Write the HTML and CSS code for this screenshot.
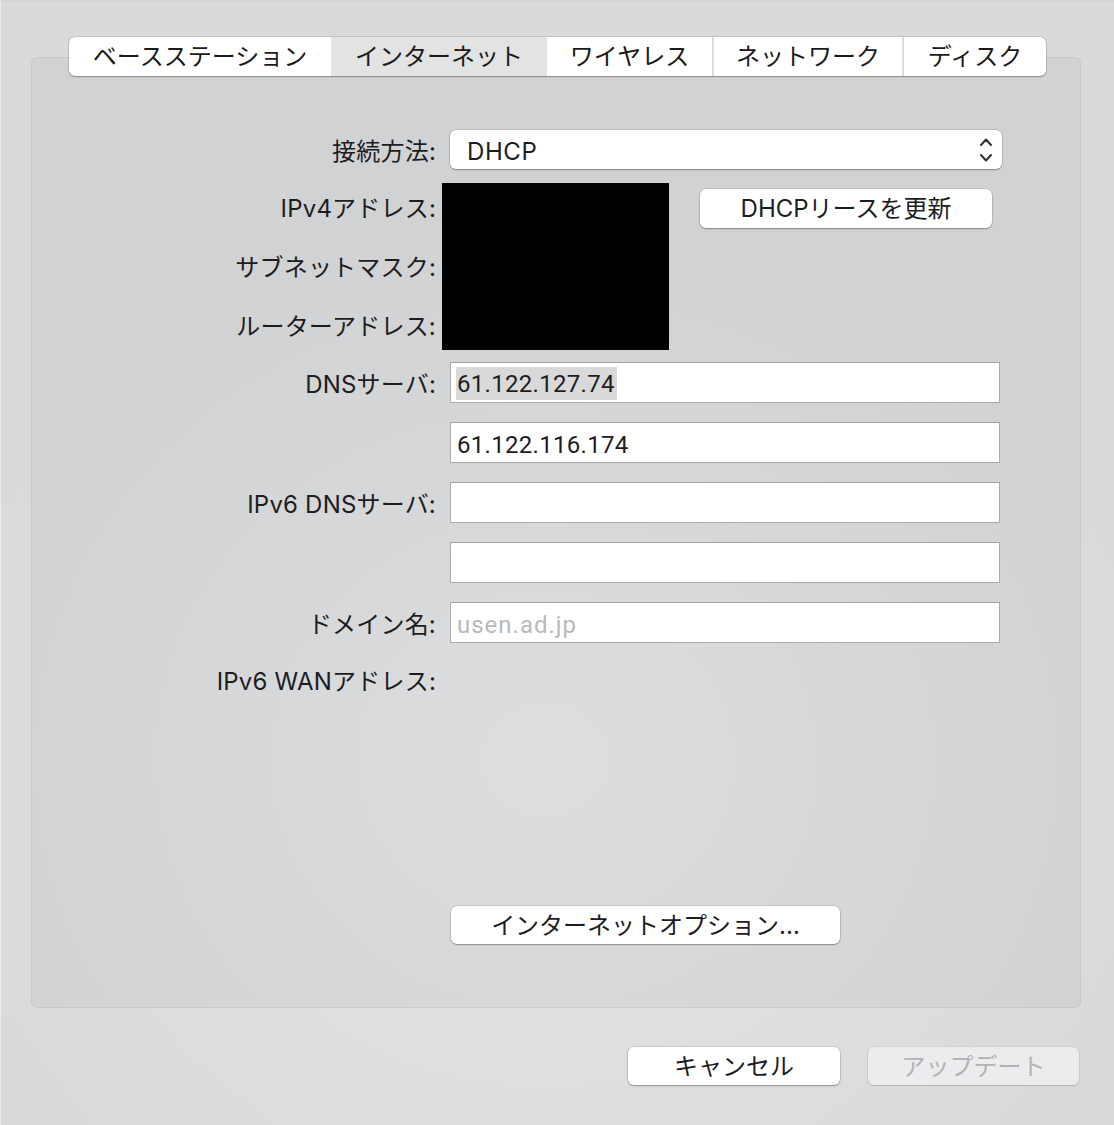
FILE: index.html
```html
<!DOCTYPE html>
<html lang="ja">
<head>
<meta charset="utf-8">
<title>インターネット</title>
<link rel="stylesheet" href="styles.css">
</head>
<body>
<div class="window">
  <div class="panel">
    <div class="tabs">
      <div class="tab t1">ベースステーション</div>
      <div class="tab t2 sel">インターネット</div>
      <div class="tab t3 after-sel">ワイヤレス</div>
      <div class="tab t4">ネットワーク</div>
      <div class="tab t5">ディスク</div>
    </div>

    <div class="form">
      <div class="row r-popup">
        <div class="label">接続方法:</div>
        <div class="popup">
          <span class="popup-text">DHCP</span>
          <svg class="chev" width="14" height="28" viewBox="0 0 14 28" aria-hidden="true">
            <polyline points="2,9 7,3.5 12,9" fill="none" stroke="#333" stroke-width="2.1" stroke-linecap="round" stroke-linejoin="round"/>
            <polyline points="2,19 7,24.5 12,19" fill="none" stroke="#333" stroke-width="2.1" stroke-linecap="round" stroke-linejoin="round"/>
          </svg>
        </div>
      </div>

      <div class="row lease">
        <div class="labels">
          <div class="label tall">IPv4アドレス:</div>
          <div class="label tall">サブネットマスク:</div>
          <div class="label tall">ルーターアドレス:</div>
        </div>
        <div class="redacted"></div>
        <div class="btn lease-btn">DHCPリースを更新</div>
      </div>

      <div class="row r-field first-field">
        <div class="label">DNSサーバ:</div>
        <div class="field"><span class="selected">61.122.127.74</span></div>
      </div>
      <div class="row r-field">
        <div class="label"></div>
        <div class="field"><span class="val">61.122.116.174</span></div>
      </div>
      <div class="row r-field">
        <div class="label">IPv6 DNSサーバ:</div>
        <div class="field"></div>
      </div>
      <div class="row r-field">
        <div class="label"></div>
        <div class="field"></div>
      </div>
      <div class="row r-field">
        <div class="label">ドメイン名:</div>
        <div class="field"><span class="placeholder">usen.ad.jp</span></div>
      </div>
      <div class="row r-wan">
        <div class="label">IPv6 WANアドレス:</div>
      </div>
    </div>

    <div class="btn options-btn">インターネットオプション...</div>
  </div>

  <div class="footer">
    <div class="btn cancel-btn">キャンセル</div>
    <div class="btn update-btn disabled">アップデート</div>
  </div>
</div>
</body>
</html>
```

FILE: styles.css
```css
html, body {
  margin: 0;
  padding: 0;
}

body {
  width: 1114px;
  height: 1125px;
  overflow: hidden;
  font-family: Inter, "Noto Sans CJK JP", sans-serif;
  color: #1d1d1f;
  background: radial-gradient(ellipse 620px 560px at 545px 760px, #e6e7e9 0%, #dfe0e2 45%, #d9dadc 100%);
}

.window {
  box-sizing: border-box;
  height: 1125px;
  padding: 57px 33px 0 31px;
  box-shadow: inset 1px 0 0 #ececee, inset 0 2px 0 #d2d3d5;
}

.panel {
  box-sizing: border-box;
  width: 1050px;
  border: 1px solid rgba(0, 0, 0, 0.055);
  border-radius: 7px;
  background: rgba(0, 0, 0, 0.035);
  display: flex;
  flex-direction: column;
  padding-bottom: 63px;
}

/* Tabs */
.tabs {
  align-self: flex-start;
  margin: -21px 0 0 37px;
  display: flex;
  height: 39px;
  background: #fff;
  border-radius: 6px;
  overflow: hidden;
  box-shadow: 0 0 0 0.5px rgba(0, 0, 0, 0.2), 0 1px 1.5px rgba(0, 0, 0, 0.28);
}

.tab {
  box-sizing: border-box;
  font-size: 24px;
  line-height: 39px;
  color: #1b1b1b;
  border-left: 2px solid #dedede;
  white-space: nowrap;
  text-align: center;
}

.t1 { width: 262px; border-left: none; }
.t2 { width: 216px; }
.t3 { width: 165px; }
.t4 { width: 190px; }
.t5 { width: 144px; }

.tab.sel {
  background: #e3e3e3;
  border-left: none;
}

.tab.after-sel {
  border-left: none;
}

/* Form */
.form {
  margin-top: 54px;
  display: flex;
  flex-direction: column;
}

.row {
  display: flex;
  align-items: center;
}

.label {
  box-sizing: border-box;
  width: 404px;
  flex: none;
  text-align: right;
  font-size: 24px;
  line-height: 30px;
  padding-top: 4px;
  letter-spacing: 0.2px;
  color: #1d1d1f;
  white-space: nowrap;
}

.r-popup {
  height: 39px;
}

.popup {
  margin-left: 14px;
  width: 552px;
  height: 39px;
  box-sizing: border-box;
  background: #fff;
  border-radius: 6px;
  box-shadow: 0 0 0 0.5px rgba(0, 0, 0, 0.18), 0 1px 1.5px rgba(0, 0, 0, 0.3);
  display: flex;
  align-items: center;
  justify-content: space-between;
  padding: 0 9px 0 17px;
}

.popup-text {
  font-size: 24px;
  line-height: 30px;
  padding-top: 4px;
  letter-spacing: 0.6px;
  color: #1d1d1f;
}

.chev {
  display: block;
}

.lease {
  margin-top: 10px;
  align-items: flex-start;
}

.labels {
  display: flex;
  flex-direction: column;
}

.label.tall {
  height: 59px;
  line-height: 59px;
  padding-top: 0;
}

.redacted {
  margin: 4px 0 0 6px;
  width: 227px;
  height: 167px;
  background: #000;
  flex: none;
}

.btn {
  box-sizing: border-box;
  background: #fff;
  border-radius: 6px;
  box-shadow: 0 0 0 0.5px rgba(0, 0, 0, 0.17), 0 1px 1.5px rgba(0, 0, 0, 0.3);
  font-size: 24px;
  color: #1d1d1f;
  text-align: center;
  white-space: nowrap;
  display: flex;
  align-items: center;
  justify-content: center;
  padding-bottom: 4px;
}

.lease-btn {
  margin: 10px 0 0 31px;
  width: 292px;
  height: 39px;
}

.r-field {
  margin-top: 19px;
}

.r-field.first-field {
  margin-top: 6px;
}

.field {
  margin-left: 14px;
  width: 550px;
  height: 41px;
  box-sizing: border-box;
  background: #fff;
  border: 1px solid #ababab;
  border-top-color: #a3a3a3;
  display: flex;
  align-items: center;
  padding: 2px 0 0 5px;
  font-family: Roboto, "Noto Sans CJK JP", sans-serif;
  font-size: 24px;
  letter-spacing: 0.3px;
}

.selected {
  background: #d9d9d9;
  padding: 2px 2px 1px 1px;
  line-height: 30px;
}

.val {
  padding-left: 1px;
  padding-top: 3px;
  line-height: 30px;
}

.placeholder {
  padding-left: 1px;
  padding-top: 3px;
  color: #b9b9b9;
  letter-spacing: 1px;
  line-height: 30px;
}

.r-wan {
  margin-top: 19px;
  height: 39px;
}

.r-wan .label {
  padding-top: 0;
}

.options-btn {
  margin: 205px 0 0 419px;
  width: 389px;
  height: 38px;
  align-self: flex-start;
}

/* Footer */
.footer {
  margin-top: 39px;
  display: flex;
  justify-content: flex-end;
  gap: 28px;
  padding-right: 2px;
}

.cancel-btn {
  width: 212px;
  height: 38px;
}

.update-btn {
  width: 211px;
  height: 38px;
}

.btn.disabled {
  background: #ececee;
  color: #b3b3b5;
  box-shadow: 0 0 0 0.5px rgba(0, 0, 0, 0.1), 0 1px 1.5px rgba(0, 0, 0, 0.14);
}
```
